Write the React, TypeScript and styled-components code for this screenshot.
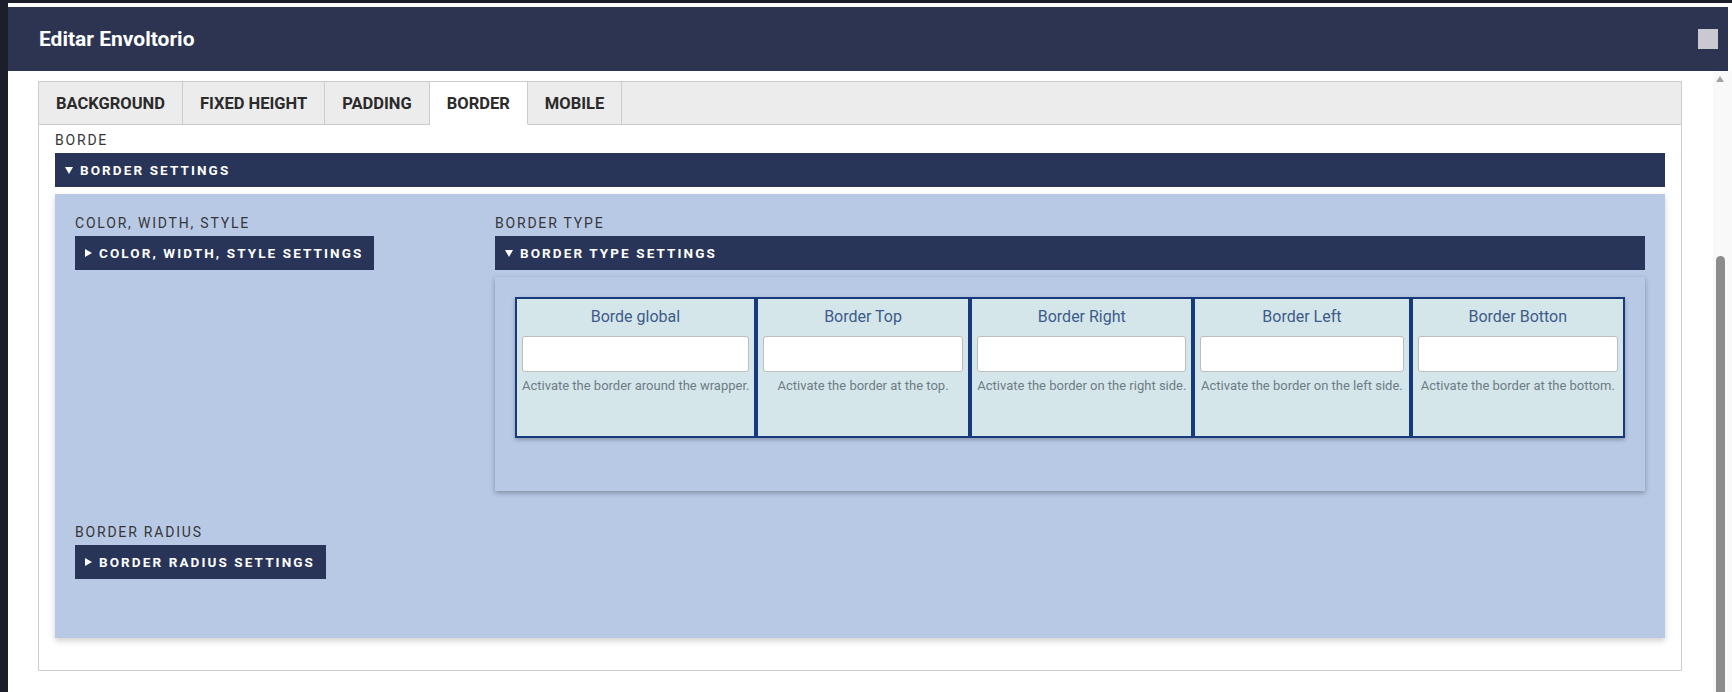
import React from "react"
import styled, { createGlobalStyle } from "styled-components"

const GlobalStyle = createGlobalStyle`
  html, body {
    margin: 0;
    padding: 0;
  }
  body {
    background: #1c1e2a;
    font-family: Roboto, "Liberation Sans", Arial, sans-serif;
    overflow: hidden;
  }
  * {
    box-sizing: border-box;
  }
`

const Modal = styled.div`
  margin: 3px 0 0 8px;
  padding-top: 4px;
  height: 689px;
  background: #ffffff;
  display: flex;
  flex-direction: column;
`

const Header = styled.header`
  flex-shrink: 0;
  height: 64px;
  margin-right: 4px;
  padding: 0 10px 0 31px;
  background: #2d3451;
  display: flex;
  align-items: center;
  justify-content: space-between;
`

const Title = styled.h1`
  margin: 0;
  color: #ffffff;
  font-size: 21px;
  font-weight: 700;
`

const CloseBox = styled.span`
  width: 20px;
  height: 20px;
  background: #c9cad1;
`

const Body = styled.div`
  flex: 1;
  min-height: 0;
  display: flex;
`

const Content = styled.div`
  flex: 1;
  padding: 10px 31px 0 30px;
`

const Scrollbar = styled.div`
  width: 19px;
  padding: 5px 0 0 3px;
  background: #f9f9f9;
  display: flex;
  flex-direction: column;
  align-items: flex-start;
`

const ScrollArrow = styled.span`
  width: 0;
  height: 0;
  border-left: 4.5px solid transparent;
  border-right: 4.5px solid transparent;
  border-bottom: 6px solid #a3a3a3;
`

const ScrollThumb = styled.span`
  flex: 1;
  width: 9px;
  margin-top: 174px;
  background: #8c8c8c;
  border-radius: 5px 5px 0 0;
`

const TabBar = styled.nav`
  display: flex;
  background: #ececec;
  border: 1px solid #cccccc;
  border-bottom: none;
`

const Tab = styled.div<{ $active?: boolean }>`
  height: 43px;
  padding: 0 17px;
  display: flex;
  align-items: center;
  font-size: 16.5px;
  font-weight: 700;
  color: #2b2b2b;
  background: ${(p) => (p.$active ? "#ffffff" : "transparent")};
  border-right: 1px solid #cccccc;
  border-bottom: 1px solid ${(p) => (p.$active ? "#ffffff" : "#cccccc")};
`

const TabFiller = styled.div`
  flex: 1;
  border-bottom: 1px solid #cccccc;
`

const TabPanel = styled.section`
  border: 1px solid #cccccc;
  border-top: none;
  padding: 6px 16px 32px;
`

const SectionLabel = styled.div`
  font-size: 14px;
  line-height: 18px;
  letter-spacing: 1.8px;
  color: #363636;
  margin-bottom: 4px;
`

const SettingsBar = styled.div<{ $fit?: boolean }>`
  width: ${(p) => (p.$fit ? "fit-content" : "auto")};
  height: 34px;
  padding: 0 11px 0 10px;
  display: flex;
  align-items: center;
  gap: 7px;
  background: #283558;
  color: #ffffff;
  font-size: 13.5px;
  font-weight: 700;
  letter-spacing: 2.1px;
`

const Caret = styled.span<{ $open?: boolean }>`
  width: 0;
  height: 0;
  ${(p) =>
    p.$open
      ? `border-left: 4px solid transparent;
         border-right: 4px solid transparent;
         border-top: 7px solid #ffffff;`
      : `border-top: 4px solid transparent;
         border-bottom: 4px solid transparent;
         border-left: 7px solid #ffffff;`}
`

const BluePanel = styled.div`
  margin-top: 7px;
  padding: 20px 20px 59px;
  background: #b8c9e6;
  box-shadow: 0 3px 6px rgba(0, 0, 0, 0.18);
  display: grid;
  grid-template-columns: 400px 1fr;
  column-gap: 20px;
  row-gap: 32px;
  align-items: start;
`

const InnerPanel = styled.div`
  margin-top: 7px;
  padding: 20px 20px 53px;
  background: #b8c9e6;
  box-shadow: 0 2px 5px rgba(0, 0, 0, 0.3);
`

const CardRow = styled.div`
  display: flex;
  box-shadow: 0 2px 4px rgba(0, 0, 0, 0.25);
`

const Card = styled.div<{ $grow: number }>`
  flex: ${(p) => p.$grow} 1 0;
  min-width: 0;
  height: 141px;
  padding: 7px 5px 5px;
  border: 2px solid #163a7b;
  background: #d4e6ea;
  display: flex;
  flex-direction: column;
  text-align: center;
`

const CardTitle = styled.div`
  font-size: 16px;
  line-height: 22px;
  color: #3e5b8a;
  margin-bottom: 8px;
`

const CardInput = styled.input`
  width: 100%;
  height: 36px;
  border: 1px solid #bdbdbd;
  border-radius: 3px;
  background: #ffffff;
`

const HelpText = styled.div`
  margin-top: 6px;
  font-size: 13px;
  line-height: 16px;
  color: #6e7c85;
  white-space: nowrap;
`

const tabs = ["BACKGROUND", "FIXED HEIGHT", "PADDING", "BORDER", "MOBILE"]

const borders = [
  { title: "Borde global", help: "Activate the border around the wrapper.", w: 241 },
  { title: "Border Top", help: "Activate the border at the top.", w: 213 },
  { title: "Border Right", help: "Activate the border on the right side.", w: 222 },
  { title: "Border Left", help: "Activate the border on the left side.", w: 216 },
  { title: "Border Botton", help: "Activate the border at the bottom.", w: 213 },
]

function App() {
  return (
    <>
      <GlobalStyle />
      <Modal>
        <Header>
          <Title>Editar Envoltorio</Title>
          <CloseBox />
        </Header>
        <Body>
          <Content>
            <TabBar>
              {tabs.map((t) => (
                <Tab key={t} $active={t === "BORDER"}>
                  {t}
                </Tab>
              ))}
              <TabFiller />
            </TabBar>
            <TabPanel>
              <SectionLabel>BORDE</SectionLabel>
              <SettingsBar>
                <Caret $open />
                BORDER SETTINGS
              </SettingsBar>
              <BluePanel>
                <div>
                  <SectionLabel>COLOR, WIDTH, STYLE</SectionLabel>
                  <SettingsBar $fit>
                    <Caret />
                    COLOR, WIDTH, STYLE SETTINGS
                  </SettingsBar>
                </div>
                <div>
                  <SectionLabel>BORDER TYPE</SectionLabel>
                  <SettingsBar>
                    <Caret $open />
                    BORDER TYPE SETTINGS
                  </SettingsBar>
                  <InnerPanel>
                    <CardRow>
                      {borders.map((b) => (
                        <Card key={b.title} $grow={b.w}>
                          <CardTitle>{b.title}</CardTitle>
                          <CardInput type="text" />
                          <HelpText>{b.help}</HelpText>
                        </Card>
                      ))}
                    </CardRow>
                  </InnerPanel>
                </div>
                <div>
                  <SectionLabel>BORDER RADIUS</SectionLabel>
                  <SettingsBar $fit>
                    <Caret />
                    BORDER RADIUS SETTINGS
                  </SettingsBar>
                </div>
              </BluePanel>
            </TabPanel>
          </Content>
          <Scrollbar>
            <ScrollArrow />
            <ScrollThumb />
          </Scrollbar>
        </Body>
      </Modal>
    </>
  )
}

export default App
